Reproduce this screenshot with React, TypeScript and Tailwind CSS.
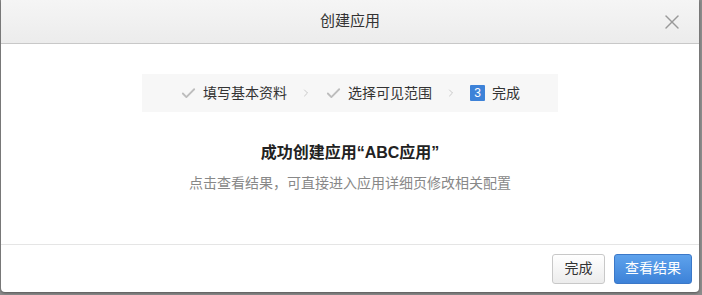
import { Check, ChevronRight, X } from "lucide-react";

const font = "font-['Liberation_Sans','Noto_Sans_CJK_SC',sans-serif]";

const steps = [
    { label: "填写基本资料", done: true },
    { label: "选择可见范围", done: true },
    { label: "完成", done: false, num: 3 },
];

const App = () => {
    return (
        <div className={`h-[295px] w-[702px] overflow-hidden bg-[#8c8c8c] ${font}`}>
            <div className="ml-[1px] flex h-[292px] w-[698px] flex-col overflow-hidden rounded-b-[4px] bg-white shadow-[0_1px_3px_rgba(0,0,0,0.4)]">
                {/* header */}
                <div className="relative flex h-[44px] shrink-0 items-center justify-center border-b border-[#c8c8c8] bg-gradient-to-b from-[#f5f5f5] to-[#ececec]">
                    <span className="text-[15px] text-[#333]">创建应用</span>
                    <button className="absolute right-[15px] top-[10px] text-[#999]">
                        <X className="size-[24px]" strokeWidth={1.4} />
                    </button>
                </div>

                {/* body */}
                <div className="flex flex-1 flex-col items-center pt-[30px]">
                    <div className="flex h-[38px] w-[416px] items-center justify-center bg-[#f7f7f7] text-[14px] text-[#333]">
                        {steps.map((step, idx) => (
                            <div key={idx} className="flex items-center">
                                {step.done ? (
                                    <Check className="mr-[6px] size-[17px] text-[#bdbdbd]" strokeWidth={2.6} />
                                ) : (
                                    <span className="mr-[7px] flex h-[16px] w-[15px] items-center justify-center rounded-[1px] bg-[#3d82d8] text-[12px] text-white">
                                        {step.num}
                                    </span>
                                )}
                                <span>{step.label}</span>
                                {idx < steps.length - 1 && (
                                    <ChevronRight className="mx-[13px] size-[12px] text-[#aaa]" strokeWidth={1.2} />
                                )}
                            </div>
                        ))}
                    </div>
                    <div className="mt-[29px] text-[16px] font-bold text-[#222]">成功创建应用“ABC应用”</div>
                    <div className="mt-[8px] text-[14px] text-[#888]">点击查看结果，可直接进入应用详细页修改相关配置</div>
                </div>

                {/* footer */}
                <div className="flex h-[48px] shrink-0 items-center justify-end gap-[9px] border-t border-[#e5e5e5] pr-[7px]">
                    <button className="h-[30px] w-[53px] rounded-[3px] border border-[#c8c8c8] bg-gradient-to-b from-white to-[#ececec] text-[14px] text-[#333]">
                        完成
                    </button>
                    <button className="h-[30px] w-[78px] rounded-[3px] border border-[#3b78c8] bg-gradient-to-b from-[#5ea2ec] to-[#3d82d8] text-[14px] text-white">
                        查看结果
                    </button>
                </div>
            </div>
        </div>
    );
};

export default App;
